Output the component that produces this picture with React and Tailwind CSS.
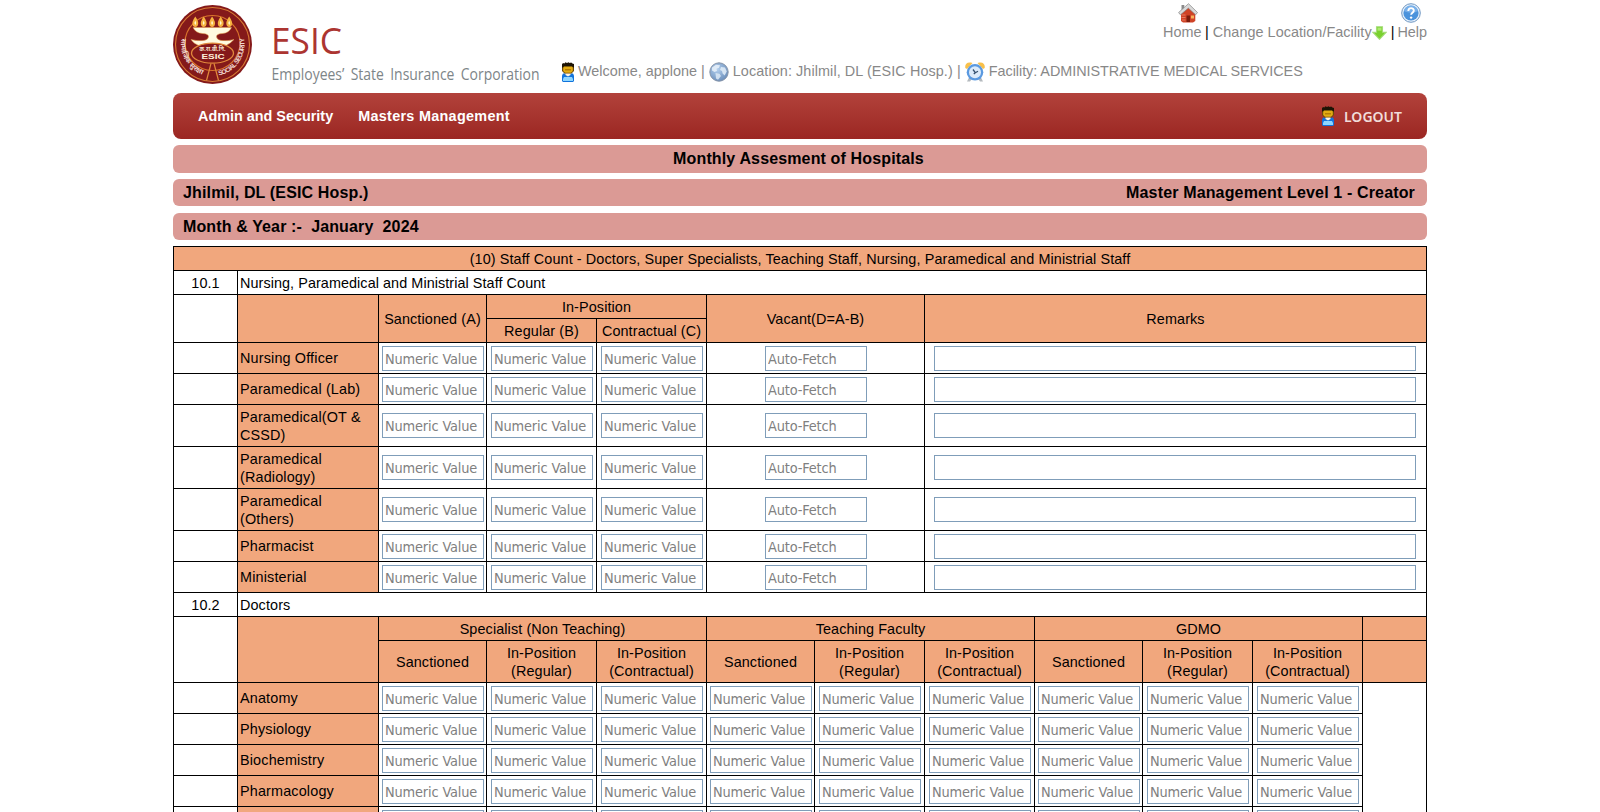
import React from "react";

const staffRows = [
  { label: "Nursing Officer", tall: false },
  { label: "Paramedical (Lab)", tall: false },
  { label: "Paramedical(OT & CSSD)", tall: true },
  { label: "Paramedical (Radiology)", tall: true },
  { label: "Paramedical (Others)", tall: true },
  { label: "Pharmacist", tall: false },
  { label: "Ministerial", tall: false },
];

const doctorRows = ["Anatomy", "Physiology", "Biochemistry", "Pharmacology", "Pathology"];
const doctorGroups = ["Specialist (Non Teaching)", "Teaching Faculty", "GDMO"];

function UserIcon() {
  return (
    <svg width="12" height="20" viewBox="0 0 12 20" className="shrink-0">
      <path d="M1 11.500h10l1 2v5.500l-1 1H1l-1-1v-5.500z" fill="#1173dc" />
      <path d="M2 15h8l1 2v2H1v-2z" fill="#8ed6ff" />
      <path d="M3.500 11h5v2L6 14.500 3.500 13z" fill="#fff3df" />
      <path d="M0 3h12v6L9.500 11.500h-7L0 9z" fill="#6d4a06" />
      <path d="M1.200 4.500h9.600V9L9 10.700H3L1.200 9z" fill="#e2ab12" />
      <path d="M3 7h6v1.500H3z" fill="#b67d06" />
      <path d="M0 5.500V2.200L1 1l1.300.4L3.500.3 5 1 6.500.2l1.200.7L9.200.4l1.200 1L12 2v3.500l-1.200-.3-.8-1H2L1.200 5.500z" fill="#1d1405" />
    </svg>
  );
}

function GlobeIcon() {
  return (
    <svg width="20" height="20" viewBox="0 0 20 20" className="shrink-0">
      <defs>
        <radialGradient id="globe" cx=".4" cy=".35" r=".75">
          <stop offset="0" stopColor="#b4d0ee" />
          <stop offset="1" stopColor="#6488b6" />
        </radialGradient>
      </defs>
      <circle cx="10" cy="10" r="9.200" fill="url(#globe)" stroke="#8694a8" strokeWidth="1" />
      <path d="M3 5.500l4-2.700 4 .5-1 2.500-2.500 1L8 9l-2.500 1L3 8.500z" fill="#eaf2fa" opacity=".85" />
      <path d="M6.500 11l4 .7 1.500 2.300-3 3.700-2-1.200z" fill="#dce9f6" opacity=".85" />
      <path d="M12 5l4 .5 1.800 4-2.200 4-2-2-.6-2.500-2-1z" fill="#e3eef9" opacity=".85" />
    </svg>
  );
}

function ClockIcon() {
  return (
    <svg width="20" height="20" viewBox="0 0 20 20" className="shrink-0">
      <path d="M4 15.500l-2 4h3l1.500-2zM16 15.500l2 4h-3l-1.500-2z" fill="#b4b9be" />
      <path d="M.3 6C-.3 1.500 2.500-.500 7.500 1L2 7zM19.700 6c.6-4.500-2.200-6.500-7.200-5L18 7z" fill="#f8c04a" />
      <circle cx="10" cy="10.300" r="8.300" fill="#5a99e0" />
      <circle cx="10" cy="10.300" r="6" fill="#dcebfa" />
      <path d="M8 7.500l2.300 3.200L13 9.200M10.300 10.700L8.800 12" fill="none" stroke="#35506e" strokeWidth="1.300" />
    </svg>
  );
}

function HomeIcon() {
  return (
    <svg width="20" height="20" viewBox="0 0 20 20" className="block">
      <path d="M3.500 2h2.800v5H3.500z" fill="#8a8a8a" />
      <path d="M3 10.500l7-6 7.300 6V18L15 19.500H5L3 18z" fill="#cf4326" />
      <path d="M3.500 12h4M3.500 14.500h4M4 17h3.500" stroke="#f0927a" strokeWidth=".7" />
      <path d="M8.500 12.500h3.500V19H8.500z" fill="#7c1d0c" />
      <path d="M13 12.500h3v3h-3z" fill="#f7b35b" />
      <path d="M10.500.7L.6 9.500l1.800 2.300 8-6.700 7.200 6.700 1.900-2.300z" fill="#d9d9d9" stroke="#858585" strokeWidth=".7" />
    </svg>
  );
}

function HelpIcon() {
  return (
    <svg width="20" height="20" viewBox="0 0 20 20" className="block">
      <circle cx="10" cy="10" r="9.300" fill="#e6f0fa" stroke="#6f97c2" strokeWidth="1" />
      <circle cx="10" cy="10" r="7.600" fill="#4b93dc" />
      <path d="M3 8a7.200 7.200 0 0 1 14 0c-4 2-9 2.500-14 0z" fill="#8cbcf0" opacity=".7" />
      <path d="M7.300 8c0-3.900 5.700-3.700 5.500-.4-.1 2-2.700 2.200-2.700 4.200" fill="none" stroke="#fff" strokeWidth="1.900" />
      <circle cx="10.100" cy="14.600" r="1.200" fill="#fff" />
    </svg>
  );
}

function DownArrow() {
  return (
    <svg width="15" height="14" viewBox="0 0 15 14" className="shrink-0">
      <path d="M4.500.7h6v5.600h3.700L7.500 13.300.8 6.300h3.700z" fill="#7ad12f" stroke="#a5dc7b" strokeWidth="1.100" />
      <path d="M5.500 1.700h4v3h-4z" fill="#aeea72" />
    </svg>
  );
}

function Emblem() {
  return (
    <svg width="79" height="79" viewBox="0.5 0.5 79 79" className="block shrink-0">
      <defs>
        <path id="ring-left" d="M9.200 34A31.500 31.500 0 0 0 34 71" />
        <path id="ring-right" d="M46.500 71A32 32 0 0 0 70.800 31" />
      </defs>
      <circle cx="40" cy="40" r="39.500" fill="#84191a" />
      <circle cx="40" cy="40" r="37" fill="none" stroke="#d87a33" strokeWidth="1.100" />
      <circle cx="40" cy="38.500" r="27.500" fill="none" stroke="#d9742c" strokeWidth="1.200" />
      {[22.800, 31.200, 39.600, 48.200, 56.700].map((x) => (
        <g key={x}>
          <path d={`M${x} 12q4.400 6 2.200 9.400q-2.200 2.200-4.400 0q-2.200-3.400 2.200-9.400z`} fill="#f6b340" />
          <path d={`M${x} 16q1.800 2.500 0 4.800q-1.800-2.300 0-4.800z`} fill="#fffbd5" />
        </g>
      ))}
      <path d="M20.500 23h38.500q-2.500 5.500-9 6-6 .3-6 3 0 3 4.500 4 7 .8 13-1-4 4.500-9 6.500-12-5-25 0-6-2-9-6.500 6 1.800 13 1 4.500-1 4.500-4 0-2.700-6-3-7-.5-9.500-6z" fill="#fffbe0" stroke="#e9a04a" strokeWidth=".5" />
      <ellipse cx="40" cy="48.700" rx="21" ry="10" fill="#84191a" stroke="#e1893c" strokeWidth="1.300" />
      <text x="40" y="46.800" textAnchor="middle" fontSize="5.500" fontWeight="700" fill="#f6e3d0" fontFamily="'Noto Sans', 'Noto Sans Devanagari', sans-serif" textLength="26">क.रा.बी.नि.</text>
      <text x="40.500" y="54.300" textAnchor="middle" fontSize="7.200" fontWeight="700" fill="#fff2dc" fontFamily="'Liberation Sans', sans-serif" textLength="23" lengthAdjust="spacingAndGlyphs">ESIC</text>
      <path d="M38.500 59L34 76M41.500 59L46 76" stroke="#e1893c" strokeWidth="1.200" fill="none" />
      <g fill="#f0d8d0" fontWeight="700" fontSize="7" fontFamily="'Liberation Sans', 'Noto Sans', sans-serif">
        <text><textPath href="#ring-left" textLength="45">सामाजिक सुरक्षा</textPath></text>
        <text fontSize="6.600"><textPath href="#ring-right" textLength="50">SOCIAL SECURITY</textPath></text>
      </g>
    </svg>
  );
}

function Wordmark() {
  return (
    <svg width="272" height="66" viewBox="0 0 272 66" className="block shrink-0 overflow-visible">
      <text x="-1" y="34" fontSize="37" fill="#ac3531" fontFamily="'Open Sans', sans-serif" textLength="71" lengthAdjust="spacingAndGlyphs">ESIC</text>
      <text x="-.5" y="60.200" fontSize="15.500" fill="#7d8588" fontFamily="'Open Sans', sans-serif" wordSpacing="3" textLength="268" lengthAdjust="spacingAndGlyphs">Employees’ State Insurance Corporation</text>
    </svg>
  );
}

function Cell({ className = "", children }) {
  return <div className={`border-b border-r border-black ${className}`}>{children}</div>;
}

function Head({ className = "", children }) {
  return (
    <Cell className={`flex items-center justify-center bg-[#f1a77d] text-center ${className}`}>{children}</Cell>
  );
}

function Field({ placeholder, className = "w-[102px]" }) {
  return (
    <input
      type="text"
      placeholder={placeholder}
      className={`block h-[25px] border border-[#7f9db9] bg-white pl-[2px] pt-px font-['DejaVu_Sans_Condensed','DejaVu_Sans',sans-serif] text-[14.4px] tracking-[-0.15px] outline-none placeholder:text-[#808080] ${className}`}
    />
  );
}

function NumericCell({ first, tall }) {
  return (
    <Cell className={`${first ? "pl-[3px]" : "pl-1"} ${tall ? "pt-2" : "pt-[3px]"}`}>
      <Field placeholder="Numeric Value" />
    </Cell>
  );
}

function RowLabel({ children }) {
  return <Cell className="flex items-center bg-[#f1a77d] pl-[2px] pr-3 tracking-[0.16px]">{children}</Cell>;
}

export default function App() {
  return (
    <div className="h-[812px] overflow-hidden bg-white font-['Liberation_Sans',Arial,sans-serif] text-[14.4px] leading-[18px] text-black">
      <div className="mx-auto w-[1254px]">
        <header className="flex h-[93px] text-[#888]">
          <div className="flex w-[389px] shrink-0 gap-5 pt-[5px]">
            <Emblem />
            <div className="pt-[15px]"><Wordmark /></div>
          </div>
          <div className="flex flex-1 flex-col">
            <div className="flex h-[41px] items-end justify-end">
              <div className="flex w-[39px] flex-col">
                <div className="pl-[15px]"><HomeIcon /></div>
                <span>Home</span>
              </div>
              <span className="pl-[3px] pr-1 text-black">|</span>
              <span className="tracking-[0.05px]">Change Location/Facility</span>
              <span className="pb-px"><DownArrow /></span>
              <span className="pl-1 pr-[3px] text-black">|</span>
              <div className="flex flex-col">
                <div className="pl-1"><HelpIcon /></div>
                <span>Help</span>
              </div>
            </div>
            <div className="flex h-5 translate-y-[21px] items-center whitespace-pre">
              <UserIcon />
              <span className="pb-[2px] pl-1">Welcome, applone | </span>
              <GlobeIcon />
              <span className="pb-[2px] tracking-[0.09px]"> Location: Jhilmil, DL (ESIC Hosp.) | </span>
              <ClockIcon />
              <span className="pb-[2px] tracking-[-0.04px]"> Facility: ADMINISTRATIVE MEDICAL SERVICES</span>
            </div>
          </div>
        </header>

        <nav className="flex h-[46px] items-center rounded-lg bg-linear-to-b from-[#b2423b] to-[#9b2622] pl-[25px] pr-[25px] font-bold text-white">
          <span>Admin and Security</span>
          <span className="pl-[25px] tracking-[0.3px]">Masters Management</span>
          <div className="ml-auto flex items-center gap-[10px]">
            <UserIcon />
            <span className="pt-px font-['Noto_Sans',sans-serif] text-[14px] font-semibold text-[#f1dcda]">LOGOUT</span>
          </div>
        </nav>

        <div className="mt-1.5 flex h-7 items-center justify-center rounded-md bg-[#db9a95] pr-[3px] text-base font-bold tracking-[0.14px]">
          Monthly Assesment of Hospitals
        </div>
        <div className="mt-1.5 flex h-[27px] items-center justify-between rounded-md bg-[#db9a95] pl-[10px] pr-3 text-base font-bold tracking-[0.15px]">
          <span>Jhilmil, DL (ESIC Hosp.)</span>
          <span>Master Management Level 1 - Creator</span>
        </div>
        <div className="mt-[7px] flex h-[27px] items-center whitespace-pre rounded-md bg-[#db9a95] pl-[10px] text-base font-bold tracking-[0.13px]">
          Month &amp; Year :-  January  2024
        </div>

        <main className="mt-1.5 border-l border-t border-black tracking-[0.11px]">
          <Head className="h-6">
            (10) Staff Count - Doctors, Super Specialists, Teaching Staff, Nursing, Paramedical and Ministrial Staff
          </Head>
          <div className="grid h-6 grid-cols-[64px_1fr]">
            <Cell className="flex items-center justify-center">10.1</Cell>
            <Cell className="flex items-center pl-[2px] tracking-[0.07px]">Nursing, Paramedical and Ministrial Staff Count</Cell>
          </div>
          <div className="grid grid-cols-[64px_141px_108px_110px_110px_218px_1fr] grid-rows-[24px_24px]">
            <Cell className="row-span-2" />
            <Head className="row-span-2" />
            <Head className="row-span-2">Sanctioned (A)</Head>
            <Head className="col-span-2">In-Position</Head>
            <Head className="row-span-2">Vacant(D=A-B)</Head>
            <Head className="row-span-2">Remarks</Head>
            <Head>Regular (B)</Head>
            <Head>Contractual (C)</Head>
          </div>
          {staffRows.map(({ label, tall }) => (
            <div
              key={label}
              className={`grid grid-cols-[64px_141px_108px_110px_110px_218px_1fr] ${tall ? "h-[42px]" : "h-[31px]"}`}
            >
              <Cell />
              <RowLabel>{label}</RowLabel>
              <NumericCell first tall={tall} />
              <NumericCell tall={tall} />
              <NumericCell tall={tall} />
              <Cell className={`pl-[58px] ${tall ? "pt-2" : "pt-[3px]"}`}>
                <Field placeholder="Auto-Fetch" />
              </Cell>
              <Cell className={`pl-[9px] pr-[10px] ${tall ? "pt-2" : "pt-[3px]"}`}>
                <Field className="w-full" />
              </Cell>
            </div>
          ))}
          <div className="grid h-6 grid-cols-[64px_1fr]">
            <Cell className="flex items-center justify-center">10.2</Cell>
            <Cell className="flex items-center pl-[2px]">Doctors</Cell>
          </div>
          <div className="grid grid-cols-[64px_141px_108px_110px_110px_108px_110px_110px_108px_110px_110px_64px] grid-rows-[24px_42px]">
            <Cell className="row-span-2" />
            <Head className="row-span-2" />
            {doctorGroups.map((g) => (
              <Head key={g} className="col-span-3">{g}</Head>
            ))}
            <Head />
            {doctorGroups.map((g) => (
              <React.Fragment key={g}>
                <Head>Sanctioned</Head>
                <Head>In-Position<br />(Regular)</Head>
                <Head>In-Position<br />(Contractual)</Head>
              </React.Fragment>
            ))}
            <Head />
          </div>
          {doctorRows.map((label) => (
            <div
              key={label}
              className="grid h-[31px] grid-cols-[64px_141px_108px_110px_110px_108px_110px_110px_108px_110px_110px_64px]"
            >
              <Cell />
              <RowLabel>{label}</RowLabel>
              {doctorGroups.map((g) => (
                <React.Fragment key={g}>
                  <NumericCell first />
                  <NumericCell />
                  <NumericCell />
                </React.Fragment>
              ))}
              <div className="border-r border-black" />
            </div>
          ))}
        </main>
      </div>
    </div>
  );
}
